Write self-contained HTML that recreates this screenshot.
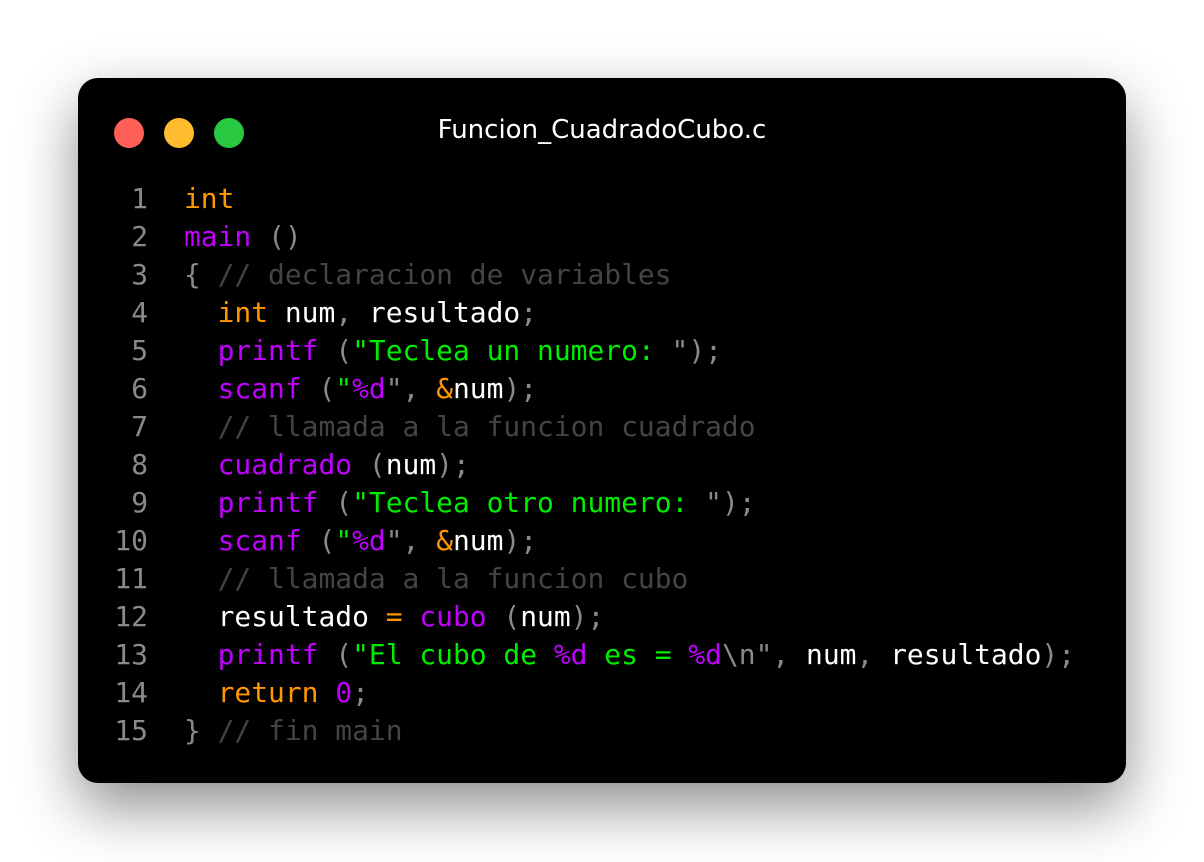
<!DOCTYPE html>
<html><head><meta charset="utf-8"><style>
html,body{margin:0;padding:0;}
body{width:1204px;height:862px;background:#fff;position:relative;overflow:hidden;font-family:"DejaVu Sans Mono","Liberation Mono",monospace;}
.win{position:absolute;left:78px;top:78px;width:1048px;height:705px;background:#000;border-radius:20px;box-shadow:0 24px 60px rgba(0,0,0,0.45);}
.dot{position:absolute;top:40px;width:30px;height:30px;border-radius:50%;}
.title{position:absolute;left:0;right:0;top:37px;text-align:center;color:#fff;font-family:"DejaVu Sans","Liberation Sans",sans-serif;font-size:26px;}
.code{position:absolute;left:0;top:102px;font-size:27.93px;line-height:38px;white-space:pre;color:#fff;}
.ln{display:inline-block;width:70px;text-align:right;color:#8a8a8a;margin-right:36px;}
.k{color:#ff9800}.f{color:#c000ff}.s{color:#00ee00}.p{color:#8a8a8a}.c{color:#444}
</style></head><body>
<div class="win">
<div class="dot" style="left:36px;background:#ff5f57"></div>
<div class="dot" style="left:86px;background:#febc2e"></div>
<div class="dot" style="left:136px;background:#28c840"></div>
<div class="title">Funcion_CuadradoCubo.c</div>
<div class="code"><span class="ln">1</span><span class="k">int</span>
<span class="ln">2</span><span class="f">main</span> <span class="p">()</span>
<span class="ln">3</span><span class="p">{</span> <span class="c">// declaracion de variables</span>
<span class="ln">4</span>  <span class="k">int</span> num<span class="p">,</span> resultado<span class="p">;</span>
<span class="ln">5</span>  <span class="f">printf</span> <span class="p">(</span><span class="s">"Teclea un numero: </span><span class="p">");</span>
<span class="ln">6</span>  <span class="f">scanf</span> <span class="p">(</span><span class="s">"</span><span class="f">%d</span><span class="p">",</span> <span class="k">&amp;</span>num<span class="p">);</span>
<span class="ln">7</span>  <span class="c">// llamada a la funcion cuadrado</span>
<span class="ln">8</span>  <span class="f">cuadrado</span> <span class="p">(</span>num<span class="p">);</span>
<span class="ln">9</span>  <span class="f">printf</span> <span class="p">(</span><span class="s">"Teclea otro numero: </span><span class="p">");</span>
<span class="ln">10</span>  <span class="f">scanf</span> <span class="p">(</span><span class="s">"</span><span class="f">%d</span><span class="p">",</span> <span class="k">&amp;</span>num<span class="p">);</span>
<span class="ln">11</span>  <span class="c">// llamada a la funcion cubo</span>
<span class="ln">12</span>  resultado <span class="k">=</span> <span class="f">cubo</span> <span class="p">(</span>num<span class="p">);</span>
<span class="ln">13</span>  <span class="f">printf</span> <span class="p">(</span><span class="s">"El cubo de </span><span class="f">%d</span><span class="s"> es = </span><span class="f">%d</span><span class="p">\n",</span> num<span class="p">,</span> resultado<span class="p">);</span>
<span class="ln">14</span>  <span class="k">return</span> <span class="f">0</span><span class="p">;</span>
<span class="ln">15</span><span class="p">}</span> <span class="c">// fin main</span></div>
</div>
</body></html>
